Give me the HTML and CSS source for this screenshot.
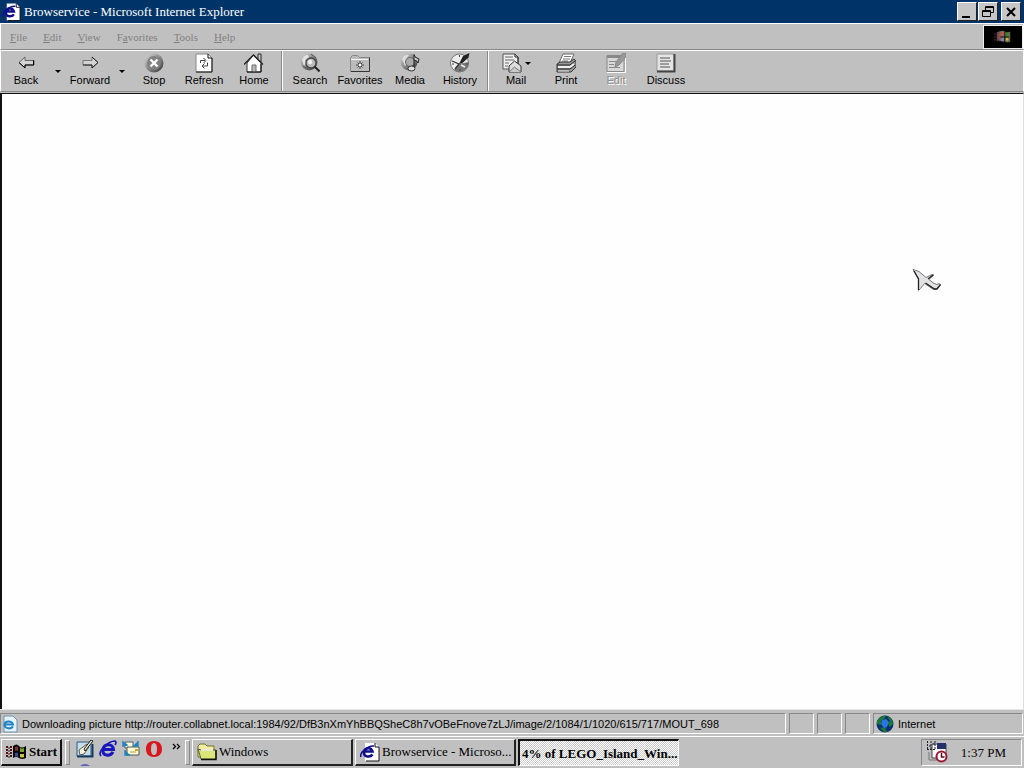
FILE: index.html
```html
<!DOCTYPE html>
<html lang="en">
<head>
<meta charset="utf-8">
<title>Browservice - Microsoft Internet Explorer</title>
<link rel="stylesheet" href="styles.css">
</head>
<body>
<svg class="defs" aria-hidden="true">
  <defs>
    <linearGradient id="ball" x1="0" y1="0" x2="1" y2="1"><stop offset="0" stop-color="#ddd"/><stop offset=".5" stop-color="#888"/><stop offset="1" stop-color="#333"/></linearGradient>
    <symbol id="epage" viewBox="0 0 20 20">
      <path d="M5 1h10l4 4v14H5z" fill="#fff"/><path d="M15 1v4h4v14H6" fill="none" stroke="#111" stroke-width="1"/>
      <path d="M12.500 12.500C10.500 15.500 3.500 15.500 4 10.500S11 4.500 12.500 9.500H5" fill="none" stroke="#10108c" stroke-width="2.600"/>
      <path d="M1 15C-1 11 8 3 14 4" fill="none" stroke="#10108c" stroke-width="1.500"/>
    </symbol>
    <symbol id="flag" viewBox="0 0 22 16">
      <path d="M1 3h2M5 3h2M1 6h2M5 6h2M1 9h2M5 9h2M1 12h2M5 12h2" stroke="#511" stroke-width="2"/>
      <path d="M3 4h2M3 7h2M3 10h2M3 13h2" stroke="#222" stroke-width="1"/>
      <path d="M8 2q4-3 6 0t7 0v12q-4 2-7 0t-6 0z" fill="#080808"/>
      <path d="M10 3q2-1 3 0v4q-2-1-3 0z" fill="#82303a"/><path d="M15 4q2 1 4 0v4h-4z" fill="#76a82e"/>
      <path d="M10 9q2-1 3 0v4q-2-1-3 0z" fill="#35489a"/><path d="M15 10h4v3q-2 1-4 0z" fill="#c8c446"/>
    </symbol>
  </defs>
</svg>

<header class="titlebar">
  <svg class="title-icon"><use href="#epage"/></svg>
  <h1 class="title">Browservice - Microsoft Internet Explorer</h1>
  <div class="controls">
    <button class="control" aria-label="Minimize"><svg viewBox="0 0 18 16"><path d="M4 13h8" stroke="#000" stroke-width="2"/></svg></button>
    <button class="control" aria-label="Restore"><svg viewBox="0 0 18 16"><path d="M6.500 6V2.500h8v6H12M6 3.500h9M3.500 6.500h8v6h-8zM3 7.500h9" fill="none" stroke="#000"/></svg></button>
    <button class="control control-close" aria-label="Close"><svg viewBox="0 0 18 16"><path d="M5 4l8 8M13 4l-8 8" stroke="#000" stroke-width="2"/></svg></button>
  </div>
</header>

<div class="menubar">
  <nav class="menus">
    <button class="menu"><u>F</u>ile</button>
    <button class="menu"><u>E</u>dit</button>
    <button class="menu"><u>V</u>iew</button>
    <button class="menu">F<u>a</u>vorites</button>
    <button class="menu"><u>T</u>ools</button>
    <button class="menu"><u>H</u>elp</button>
  </nav>
  <div class="throbber">
    <svg viewBox="0 0 20 16"><path d="M3 3q3-2 6 0v10q-3-2-6 0z" fill="#7d4058"/><path d="M1 4v9" stroke="#514148" stroke-dasharray="2 1"/><path d="M6 2q4-2 6 0t6 0v11q-3 2-6 0t-6 0z" fill="#746a52"/><path d="M8 3q2-1 3 0v4H8z" fill="#c2584a"/><path d="M13 3h3v5h-3z" fill="#37842e"/><path d="M8 9h3v4H8z" fill="#7c7fb8"/><path d="M13 9h3v3h-3z" fill="#c9b93e"/><path d="M12 2v11M7 8h10" stroke="#111"/></svg>
  </div>
</div>

<div class="toolbar">
  <button class="tool"><svg viewBox="0 0 20 20"><path d="M3 9.500l6-5.500v3.500h9v4.500H9v3z" fill="#d4d4d4" stroke="#666"/><path d="M3 9.500L9 15v-3h8.500V7.500" fill="none" stroke="#000"/></svg>Back</button>
  <button class="drop" aria-label="Back list"></button>
  <button class="tool"><svg viewBox="0 0 20 20"><path d="M18 9.500L12 4v3.500H3V12h9v3z" fill="#d4d4d4" stroke="#777"/><path d="M3 12h9v3l6-5.500L12 4" fill="none" stroke="#222"/></svg>Forward</button>
  <button class="drop" aria-label="Forward list"></button>
  <button class="tool"><svg viewBox="0 0 20 20"><circle cx="10" cy="10" r="9.500" fill="url(#ball)"/><circle cx="10" cy="10" r="7" fill="#808080"/><path d="M6.500 6.500l7 7M13.500 6.500l-7 7" stroke="#fff" stroke-width="2.400"/></svg>Stop</button>
  <button class="tool"><svg viewBox="0 0 20 20"><path d="M2 1h12l4 4v14H2z" fill="#fff" stroke="#888"/><path d="M14 1v4h4v14H2" fill="none" stroke="#111"/><path d="M6.500 10V7.500H11M9.500 5l2.500 2.500L9.500 10M13.500 9.500V13H9M10.500 10.500L8 13l2.500 2.500" fill="none" stroke="#444"/></svg>Refresh</button>
  <button class="tool"><svg viewBox="0 0 20 20"><path d="M14 6V1h3v8" fill="#ccc" stroke="#222"/><path d="M3 10v9h14v-9L9.500 2z" fill="#fff" stroke="#333"/><path d="M0 11.500L9.500 2l9.500 9.500" fill="none" stroke="#222" stroke-width="1.300"/><path d="M8 19v-7h4v7" fill="#bbb" stroke="#666"/><path d="M17 11v8H3" fill="none" stroke="#111"/></svg>Home</button>
  <span class="divider"></span>
  <button class="tool"><svg viewBox="0 0 20 20"><circle cx="9" cy="9" r="8.500" fill="url(#ball)"/><path d="M2 7q2-5 6-5l1 2-4 3 1 3-2 3z" fill="#e4e4e4"/><path d="M3 13l5 3M11 1l5 4" stroke="#555"/><circle cx="11" cy="10" r="5" fill="#bbb" stroke="#444" stroke-width="1.300"/><circle cx="10" cy="9" r="2.200" fill="#eee"/><path d="M14.500 13.500l5 5" stroke="#222" stroke-width="2"/></svg>Search</button>
  <button class="tool"><svg viewBox="0 0 20 20"><path d="M.5 18.500v-14l2-2h5l2 2h10v14z" fill="#bbb" stroke="#888"/><path d="M1 18.500h18.500v-14" fill="none" stroke="#333"/><path d="M1 6.500h17" stroke="#f4f4f4"/><path d="M10 8v8M6 12h8M7.500 9.500l5 5M12.500 9.500l-5 5" stroke="#444"/><path d="M9 11h2v2H9z" fill="#fff"/></svg>Favorites</button>
  <button class="tool"><svg viewBox="0 0 20 20"><circle cx="9" cy="9" r="8.500" fill="url(#ball)"/><path d="M2 6q3-5 7-4L6 6l2 4-3 3z" fill="#ddd"/><circle cx="10" cy="9" r="4.500" fill="#aaa" stroke="#666"/><path d="M14 15V1.500q0 3 5 4.500l-1 4q0-2-4-3" fill="#ccc" stroke="#222"/><ellipse cx="11.500" cy="15.500" rx="3.500" ry="2.500" fill="#ddd" stroke="#333"/></svg>Media</button>
  <button class="tool"><svg viewBox="0 0 20 20"><circle cx="9.500" cy="10" r="9" fill="#eee" stroke="#777"/><path d="M18.500 9A9 9 0 0 1 4 17l5-6z" fill="#777"/><path d="M9 11L13 3l6.500-3-1 4.500-6 5.500z" fill="#222"/><path d="M2 8l7 3-4 5" fill="none" stroke="#333" stroke-width="1.300"/><path d="M9.500 2v2M2 11h2M10 16v2M16 11h2" stroke="#444"/><path d="M11 12l4 2" stroke="#eee" stroke-width="1.500"/></svg>History</button>
  <span class="divider"></span>
  <button class="tool tool-mail"><svg viewBox="0 0 20 20"><path d="M1 1h12l3 3v12H1z" fill="#eee" stroke="#555"/><path d="M13 1v3h3v7" fill="none" stroke="#222"/><path d="M3 4h8M3 7h9M3 10h4M3 13h3" stroke="#666"/><path d="M7 13l5.500-5 6.500 5v6H7z" fill="#ddd" stroke="#333"/><path d="M7 19l5.500-5 6.500 5" fill="#c8c8c8" stroke="#777"/></svg>Mail</button>
  <button class="tool"><svg viewBox="0 0 20 20"><path d="M7 1h11l-4 9H3z" fill="#fff" stroke="#666"/><path d="M8 3.500h7M7 6h7M6 8h6" stroke="#777"/><path d="M1 11l3-2h10l4-3 2 2v6l-5 5H1z" fill="#999" stroke="#333"/><path d="M1 12h13l5-4M1 16h13l5-4" fill="none" stroke="#222"/><path d="M2 14h12l4-3" fill="none" stroke="#eee" stroke-width="2"/><path d="M2 18h11" stroke="#ddd"/></svg>Print</button>
  <button class="tool" disabled><svg viewBox="0 0 20 20"><path d="M1 2.500h17v16H1z" fill="#d8d8d8" stroke="#888"/><path d="M1 2h15v3H1z" fill="#888"/><path d="M3 8.500h7M3 11.500h5M3 14.500h11" stroke="#888"/><path d="M17 0h3v4l-7 8-4 2 1-5z" fill="#999" stroke="#888"/><path d="M19.500 5v14.500H1" fill="none" stroke="#fff"/></svg>Edit</button>
  <button class="tool"><svg viewBox="0 0 20 20"><path d="M1 1h17v17H1z" fill="#e4e4e4" stroke="#999"/><path d="M18.500 1v17.500H1" fill="none" stroke="#444" stroke-width="2"/><path d="M4 5h10M4 8h11M4 11h9M4 14h10" stroke="#555"/></svg>Discuss</button>
</div>

<main class="page"></main>

<footer class="statusbar">
  <div class="pane pane-message">
    <svg viewBox="0 0 16 18"><path d="M2 1h9l4 4v12H2z" fill="#e5f3ff" stroke="#6e91ad"/><path d="M11 11.500C8 15 2 13 2.500 9.500S9.500 5 11 9.500H3" fill="none" stroke="#2384c4" stroke-width="2"/></svg>
    <span>Downloading picture http://router.collabnet.local:1984/92/DfB3nXmYhBBQSheC8h7vOBeFnove7zLJ/image/2/1084/1/1020/615/717/MOUT_698</span>
  </div>
  <div class="pane pane-slot"></div>
  <div class="pane pane-slot"></div>
  <div class="pane pane-slot"></div>
  <div class="pane pane-zone">
    <svg viewBox="0 0 18 18"><circle cx="9" cy="9" r="8.500" fill="#0c2f71"/><path d="M1 6q4-6 9-5l-2 3-3 2v4l-4-1zM11 1q6 2 6 8l-3 3-2-3 2-3zM4 13l5-1 2 5H8z" fill="#187a35"/><path d="M6 5l4-1 3 3-2 5-3 1-3-4z" fill="#2878dc"/></svg>
    <span>Internet</span>
  </div>
</footer>

<div class="taskbar">
  <button class="start"><svg><use href="#flag"/></svg>Start</button>
  <span class="grip"></span>
  <div class="quick">
    <div class="launchers">
      <button class="launcher" aria-label="Show desktop"><svg viewBox="0 0 18 18"><path d="M1 2h14v14H1z" fill="#c8dce8" stroke="#285b82"/><path d="M1 16.500h15.500V4" fill="none" stroke="#173b60" stroke-width="2"/><path d="M3 10l8-6 2 3-5 7-4 1z" fill="#f7f7dc" stroke="#555"/><path d="M8 9l7-9 2 1-8 10z" fill="#e8e9ce" stroke="#222"/></svg></button>
      <button class="launcher" aria-label="Internet Explorer"><svg viewBox="0 0 18 18"><path d="M14 12C11 17 3 16 4 9.500S14 3 14.500 9.500H5" fill="none" stroke="#1717bd" stroke-width="3"/><path d="M2 16C-2 12 9 1 16 1q2 1 0 4" fill="none" stroke="#1717bd" stroke-width="1.700"/></svg></button>
      <button class="launcher" aria-label="Outlook Express"><svg viewBox="0 0 18 18"><path d="M3 2h8v6H3z" fill="#fffbd4" stroke="#42627a"/><path d="M5 7h12v8H5z" fill="#fffbd4" stroke="#555"/><path d="M8 12h6" stroke="#b69b42"/><path d="M1 6V2l4 3zM16 1v5h-5M3 10v5h5" fill="#2383bd" stroke="#2383bd" stroke-width="1.400"/><path d="M13 9h3v2h-3z" fill="#c8a72c"/></svg></button>
      <button class="launcher" aria-label="Opera"><svg viewBox="0 0 18 18"><path fill-rule="evenodd" d="M9 1C3 1 1 5 1 9s2 8 8 8 8-4 8-8-2-8-8-8zm0 2c2 0 3 2 3 6s-1 6-3 6-3-2-3-6 1-6 3-6z" fill="#d9161e"/></svg></button>
    </div>
    <svg class="peek" viewBox="0 0 10 2"><path d="M0 2q5-4 10 0z" fill="#5961b8"/></svg>
  </div>
  <button class="more" aria-label="More launchers"><svg viewBox="0 0 9 7"><path d="M1 1l2.500 2.500L1 6M5 1l2.500 2.500L5 6" fill="none" stroke="#000" stroke-width="1.300"/></svg></button>
  <span class="grip"></span>
  <nav class="tasks">
    <button class="task"><svg viewBox="0 0 20 20"><path d="M1 15V4l2-2h5l2 2h7v11z" fill="#f2eda0" stroke="#6e713c"/><path d="M4 8h15v9H4L1 7z" fill="#dce678" stroke="#555c27"/><path d="M4 17.500h15V8" fill="none" stroke="#111" stroke-width="1.500"/><path d="M4 8h12" stroke="#fff" stroke-width="1.500"/></svg><span>Windows</span></button>
    <button class="task"><svg><use href="#epage"/></svg><span>Browservice - Microso...</span></button>
    <button class="task task-active"><span>4% of LEGO_Island_Win...</span></button>
  </nav>
  <div class="tray">
    <svg viewBox="0 0 22 22"><path d="M6 3h14v14H6z" fill="#fafafa" stroke="#444"/><path d="M11 2h9v6h-9z" fill="#23306c"/><path d="M1.500 0v9M5 0v9M9 0v9M1 8.500h9M3 5h2M7 3h2" stroke="#223" stroke-dasharray="2 1"/><path d="M3 11v8h8" fill="none" stroke="#777"/><circle cx="15.500" cy="15.500" r="5" fill="#fff" stroke="#9b1834" stroke-width="2"/><path d="M15.500 12v4h3" fill="none" stroke="#5d0618" stroke-width="1.500"/></svg>
    <time>1:37 PM</time>
  </div>
</div>

<svg class="cursor" viewBox="0 0 30 25" aria-hidden="true"><path d="M1 1.500l6 2 7 6 6-3 2 .5-5 4.500 5 4 3 1 2-1 1.500 1-4 4.500-3 .5-9-6-4 5-2 2V11z" fill="#e2e2e6" stroke="#777"/><path d="M6.500 22V11L2 3M13.500 15l9 6h2.500l3.500-4.500M16 11l5-4" fill="none" stroke="#222" stroke-width="1.300"/></svg>
</body>
</html>
```
FILE: styles.css
```css
* {
  box-sizing: border-box;
}

body {
  margin: 0;
  min-height: 100vh;
  display: flex;
  flex-direction: column;
  background: #c0c0c0;
  color: #000;
  font: 12px/16px "Liberation Sans", sans-serif;
}

button {
  margin: 0;
  padding: 0;
  border: 0;
  background: none;
  color: inherit;
  font: inherit;
}

svg {
  display: block;
  flex: none;
}

.defs {
  position: absolute;
  width: 0;
  height: 0;
}

.titlebar {
  display: flex;
  align-items: center;
  height: 23px;
  padding: 0 3px 0 2px;
  background: #003468;
  color: #fff;
}

.title-icon {
  width: 19px;
  height: 20px;
}

.title {
  flex: 1;
  margin: 0 0 0 3px;
  font: 13px/16px "Liberation Serif", serif;
}

.controls {
  display: flex;
  gap: 1px;
}

.control {
  width: 20px;
  height: 19px;
  background: #c6c6c6;
  border: 1px solid;
  border-color: #fff #222 #222 #fff;
}

.control svg {
  width: 18px;
  height: 16px;
}

.control-close {
  margin-left: 2px;
}

.menubar {
  display: flex;
  justify-content: space-between;
  height: 27px;
  padding: 2px 1px 1px 2px;
  border: 1px solid;
  border-color: #fff #fff #888 #fff;
}

.menus {
  display: flex;
  align-items: center;
  gap: 16px;
  padding-left: 7px;
  color: #808080;
  font: 11px/16px "Liberation Serif", serif;
  text-shadow: 1px 1px #dcdcdc;
}

.throbber {
  display: flex;
  align-items: center;
  justify-content: center;
  width: 38px;
  background: #000;
  outline: 1px solid #eee;
}

.throbber svg {
  width: 18px;
  height: 16px;
}

.toolbar {
  display: flex;
  align-items: stretch;
  height: 42px;
  border: 1px solid;
  border-color: #fff #fff #888 #fff;
}

.tool {
  display: flex;
  flex-direction: column;
  align-items: center;
  width: 50px;
  padding-top: 2px;
  font-size: 11px;
  line-height: 14px;
}

.tool svg {
  width: 20px;
  height: 20px;
}

.tool:disabled {
  color: #909090;
  text-shadow: 1px 1px #fff;
}

.drop {
  width: 14px;
}

.drop::before,
.tool-mail::after {
  content: "";
  display: block;
  width: 0;
  margin: 0 auto;
  border: 3px solid transparent;
  border-top-color: #000;
  border-bottom: 0;
}

.tool-mail {
  position: relative;
}

.tool-mail svg {
  margin-right: 8px;
}

.tool-mail::after {
  position: absolute;
  top: 11px;
  right: 10px;
}

.divider {
  width: 2px;
  margin: 0 2px;
  border-left: 1px solid #888;
  border-right: 1px solid #fff;
}

.page {
  flex: 1;
  margin-top: 1px;
  background: #fefefe;
  border: solid #111;
  border-width: 1px 0 0 2px;
  border-right: 1px solid #ddd;
}

.statusbar {
  display: flex;
  gap: 3px;
  height: 27px;
  padding: 3px 1px 2px 0;
  border-top: 1px solid #e4e4e4;
}

.pane {
  display: flex;
  align-items: center;
  gap: 4px;
  border: 1px solid;
  border-color: #888 #fff #fff #888;
  font-size: 11px;
}

.pane-message {
  flex: 1;
  min-width: 0;
  padding-left: 1px;
  white-space: nowrap;
}

.pane-message svg {
  width: 16px;
  height: 18px;
}

.pane-slot {
  width: 25px;
}

.pane-zone {
  width: 150px;
  padding-left: 2px;
}

.pane-zone svg {
  width: 18px;
  height: 18px;
}

.taskbar {
  display: flex;
  align-items: center;
  height: 32px;
  padding: 1px 2px 2px 1px;
  border-top: 1px solid #fff;
  font: 13px/16px "Liberation Serif", serif;
}

.start {
  display: flex;
  align-items: center;
  gap: 2px;
  width: 61px;
  height: 27px;
  padding-left: 3px;
  border: solid;
  border-width: 1px 2px 2px 1px;
  border-color: #fff #111 #111 #fff;
  font-weight: bold;
}

.start svg {
  width: 22px;
  height: 16px;
}

.grip {
  width: 5px;
  height: 25px;
  margin-left: 3px;
  border: 1px solid;
  border-color: #fff #888 #888 #fff;
}

.quick {
  display: flex;
  flex-direction: column;
  align-items: flex-start;
  justify-content: space-between;
  height: 28px;
  margin-left: 6px;
  padding-top: 2px;
}

.launchers {
  display: flex;
  gap: 5px;
}

.launcher svg {
  width: 18px;
  height: 18px;
}

.peek {
  width: 10px;
  height: 2px;
  margin-left: 4px;
}

.more {
  align-self: flex-start;
  margin: 5px 1px 0 9px;
}

.more svg {
  width: 9px;
  height: 7px;
}

.tasks {
  display: flex;
  flex: 1;
  gap: 2px;
  min-width: 0;
  margin-left: 2px;
}

.task {
  display: flex;
  align-items: center;
  gap: 2px;
  width: 161px;
  height: 27px;
  padding-left: 4px;
  border: solid;
  border-width: 1px 2px 2px 1px;
  border-color: #fff #222 #222 #fff;
  white-space: nowrap;
}

.task svg {
  width: 20px;
  height: 20px;
}

.task-active {
  padding: 2px 0 0 2px;
  border-width: 2px 1px 1px 2px;
  border-color: #111 #fff #fff #111;
  background: repeating-conic-gradient(#fff 0 25%, #cacaca 0 50%) 0 0 / 2px 2px;
  font-weight: bold;
}

.tray {
  display: flex;
  align-items: center;
  justify-content: space-between;
  width: 101px;
  height: 27px;
  padding: 0 15px 0 4px;
  border: 1px solid;
  border-color: #888 #fff #fff #888;
}

.tray time {
  padding-top: 2px;
}

.tray svg {
  width: 22px;
  height: 22px;
}

.cursor {
  position: absolute;
  top: 268px;
  left: 912px;
  width: 30px;
  height: 25px;
}
```
